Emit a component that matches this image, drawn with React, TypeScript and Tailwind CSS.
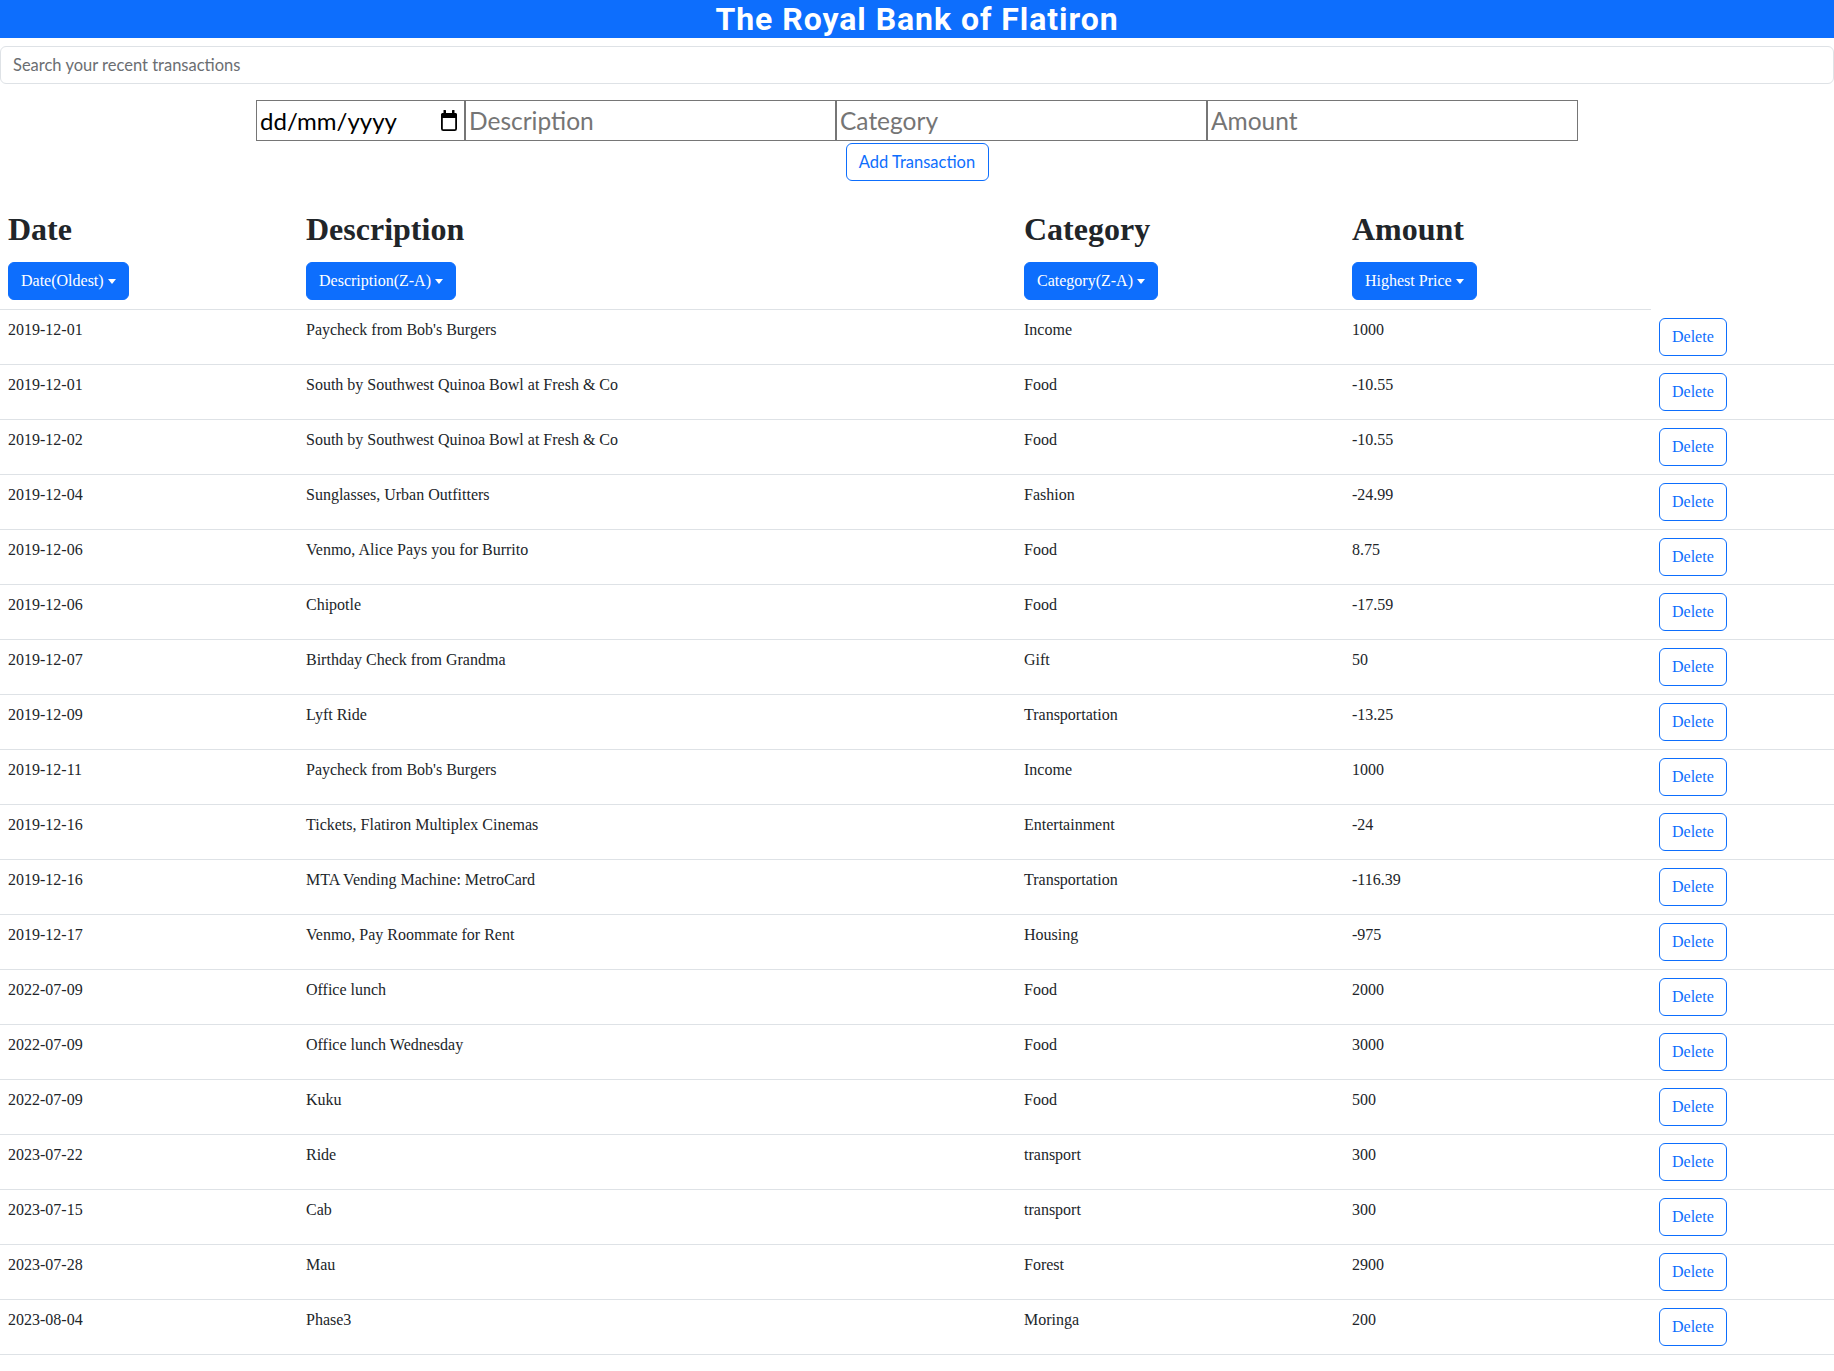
const transactions = [
  { date: '2019-12-01', description: "Paycheck from Bob's Burgers", category: 'Income', amount: '1000' },
  { date: '2019-12-01', description: 'South by Southwest Quinoa Bowl at Fresh & Co', category: 'Food', amount: '-10.55' },
  { date: '2019-12-02', description: 'South by Southwest Quinoa Bowl at Fresh & Co', category: 'Food', amount: '-10.55' },
  { date: '2019-12-04', description: 'Sunglasses, Urban Outfitters', category: 'Fashion', amount: '-24.99' },
  { date: '2019-12-06', description: 'Venmo, Alice Pays you for Burrito', category: 'Food', amount: '8.75' },
  { date: '2019-12-06', description: 'Chipotle', category: 'Food', amount: '-17.59' },
  { date: '2019-12-07', description: 'Birthday Check from Grandma', category: 'Gift', amount: '50' },
  { date: '2019-12-09', description: 'Lyft Ride', category: 'Transportation', amount: '-13.25' },
  { date: '2019-12-11', description: "Paycheck from Bob's Burgers", category: 'Income', amount: '1000' },
  { date: '2019-12-16', description: 'Tickets, Flatiron Multiplex Cinemas', category: 'Entertainment', amount: '-24' },
  { date: '2019-12-16', description: 'MTA Vending Machine: MetroCard', category: 'Transportation', amount: '-116.39' },
  { date: '2019-12-17', description: 'Venmo, Pay Roommate for Rent', category: 'Housing', amount: '-975' },
  { date: '2022-07-09', description: 'Office lunch', category: 'Food', amount: '2000' },
  { date: '2022-07-09', description: 'Office lunch Wednesday', category: 'Food', amount: '3000' },
  { date: '2022-07-09', description: 'Kuku', category: 'Food', amount: '500' },
  { date: '2023-07-22', description: 'Ride', category: 'transport', amount: '300' },
  { date: '2023-07-15', description: 'Cab', category: 'transport', amount: '300' },
  { date: '2023-07-28', description: 'Mau', category: 'Forest', amount: '2900' },
  { date: '2023-08-04', description: 'Phase3', category: 'Moringa', amount: '200' },
];

const headers = [
  { title: 'Date', sort: 'Date(Oldest)' },
  { title: 'Description', sort: 'Description(Z-A)' },
  { title: 'Category', sort: 'Category(Z-A)' },
  { title: 'Amount', sort: 'Highest Price' },
];

const uiFont = { fontFamily: 'Lato, "Noto Sans", sans-serif' };

// native date picker glyph, drawn by hand
function CalendarIcon() {
  return (
    <svg width="18" height="21" viewBox="0 0 18 21" fill="none">
      <rect x="3.5" y="0" width="2.5" height="3.5" rx="0.5" fill="#000" />
      <rect x="12" y="0" width="2.5" height="3.5" rx="0.5" fill="#000" />
      <path d="M1 4.8A1.8 1.8 0 0 1 2.8 3h12.4A1.8 1.8 0 0 1 17 4.8V8H1z" fill="#000" />
      <rect x="1.9" y="3.9" width="14.2" height="16.2" rx="1.4" stroke="#000" strokeWidth="1.8" />
    </svg>
  );
}

function SortButton({ label }: { label: string }) {
  return (
    <button className="inline-flex items-center h-[38px] px-3 bg-[#0d6efd] border border-[#0d6efd] rounded-md text-white text-base leading-6">
      {label}
      <span className="ml-[4px] inline-block w-0 h-0 border-l-[4px] border-r-[4px] border-t-[5px] border-l-transparent border-r-transparent border-t-white" />
    </button>
  );
}

export default function App() {
  return (
    <div className="min-h-[1371px] bg-white text-[#212529]" style={{ fontFamily: '"Liberation Serif", "Times New Roman", serif' }}>
      <header className="h-[38px] bg-[#0d6efd] flex items-center justify-center">
        <h1 className="text-white text-[32px] leading-[38px] font-bold tracking-[0.95px]" style={{ fontFamily: 'Roboto, Lato, sans-serif' }}>
          The Royal Bank of Flatiron
        </h1>
      </header>

      <div className="mt-2">
        <input
          type="text"
          placeholder="Search your recent transactions"
          className="block w-full h-[38px] px-3 border border-[#dee2e6] rounded-md text-[16.5px] text-[#212529] placeholder:text-[#6b6e72] outline-none"
          style={uiFont}
        />
      </div>

      <form className="mt-4 flex flex-col items-center" style={uiFont} onSubmit={(e) => e.preventDefault()}>
        <div className="flex">
          <div className="w-[209px] h-[41px] border border-[#767676] flex items-center justify-between pl-[3px] pr-[6px]">
            <span className="text-[24px] text-black">dd/mm/yyyy</span>
            <CalendarIcon />
          </div>
          <input
            placeholder="Description"
            className="w-[371px] h-[41px] border border-[#767676] px-[3px] text-[24.5px] placeholder:text-[#757575] outline-none"
          />
          <input
            placeholder="Category"
            className="w-[371px] h-[41px] border border-[#767676] px-[3px] text-[24.5px] placeholder:text-[#757575] outline-none"
          />
          <input
            placeholder="Amount"
            className="w-[371px] h-[41px] border border-[#767676] px-[3px] text-[24.5px] placeholder:text-[#757575] outline-none"
          />
        </div>
        <button
          type="submit"
          className="mt-[2px] h-[38px] w-[143px] border border-[#0d6efd] rounded-md text-[#0d6efd] text-[16.5px] leading-6"
        >
          Add Transaction
        </button>
      </form>

      <table className="mt-[22px] w-full table-fixed border-separate border-spacing-0">
        <colgroup>
          <col className="w-[298px]" />
          <col className="w-[718px]" />
          <col className="w-[328px]" />
          <col className="w-[307px]" />
          <col />
        </colgroup>
        <thead>
          <tr>
            {headers.map((h) => (
              <th key={h.title} className="text-left align-top font-normal px-2 pt-[7px] pb-[9px] border-b border-[#dee2e6]">
                <h2 className="text-[32px] leading-[38px] font-bold mb-[14px]">{h.title}</h2>
                <SortButton label={h.sort} />
              </th>
            ))}
          </tr>
        </thead>
        <tbody>
          {transactions.map((t, i) => (
            <tr key={i}>
              <td className="align-top p-2 text-base leading-6 border-b border-[#dee2e6]">{t.date}</td>
              <td className="align-top p-2 text-base leading-6 border-b border-[#dee2e6]">{t.description}</td>
              <td className="align-top p-2 text-base leading-6 border-b border-[#dee2e6]">{t.category}</td>
              <td className="align-top p-2 text-base leading-6 border-b border-[#dee2e6]">{t.amount}</td>
              <td className="align-top p-2 border-b border-[#dee2e6]">
                <div className="flex">
                  <button className="h-[38px] px-3 border border-[#0d6efd] rounded-md text-[#0d6efd] text-base leading-6">
                    Delete
                  </button>
                </div>
              </td>
            </tr>
          ))}
        </tbody>
      </table>
    </div>
  );
}
